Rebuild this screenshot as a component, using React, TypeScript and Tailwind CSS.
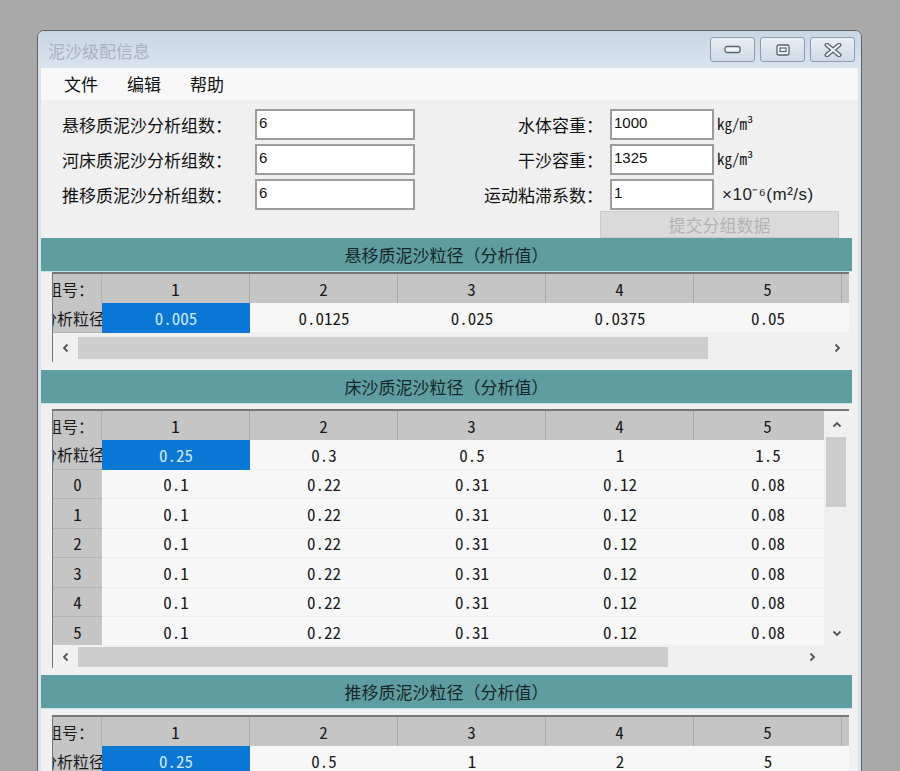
import React from 'react';

type Row = { head: string; cells: string[]; h: string; text?: boolean };

const cols = ['1', '2', '3', '4', '5', '6'];

function Chevron({ dir }: { dir: 'left' | 'right' | 'up' | 'down' }) {
  const d = {
    left: 'M6.5 1.5L3 5l3.5 3.5',
    right: 'M3.5 1.5L7 5 3.5 8.5',
    up: 'M1.5 6.5L5 3l3.5 3.5',
    down: 'M1.5 3.5L5 7l3.5-3.5',
  }[dir];
  return (
    <svg width="10" height="10" viewBox="0 0 10 10">
      <path d={d} fill="none" stroke="#555" strokeWidth="1.8" />
    </svg>
  );
}

function WinButton({ kind }: { kind: 'min' | 'max' | 'close' }) {
  return (
    <div className="flex h-[25px] w-[45px] items-center justify-center rounded-[3px] border border-[#8e9dac] bg-linear-to-b from-[#e8eef4] to-[#cfdae5]">
      {kind === 'min' && (
        <svg width="17" height="9" viewBox="0 0 17 9">
          <rect x="1" y="1.5" width="15" height="6" rx="2" fill="#f3f6f9" stroke="#56636f" strokeWidth="1.3" />
        </svg>
      )}
      {kind === 'max' && (
        <svg width="14" height="12" viewBox="0 0 14 12">
          <rect x="1" y="1" width="12" height="10" rx="1.5" fill="#f3f6f9" stroke="#56636f" strokeWidth="1.3" />
          <rect x="4" y="4" width="6" height="3.5" fill="none" stroke="#56636f" strokeWidth="1.2" />
        </svg>
      )}
      {kind === 'close' && (
        <svg width="20" height="14" viewBox="0 0 20 14">
          <path d="M4 2l12 10M16 2L4 12" stroke="#56636f" strokeWidth="4.8" strokeLinecap="round" />
          <path d="M4 2l12 10M16 2L4 12" stroke="#f3f6f9" strokeWidth="2.2" strokeLinecap="round" />
        </svg>
      )}
    </div>
  );
}

function Field({ value, w }: { value: string; w: string }) {
  return (
    <div className={`${w} h-[31px] border-2 border-[#9c9c9c] bg-white pl-[2px] pt-[3px] font-['Liberation_Sans',sans-serif] text-[15px] leading-[18px] text-[#111]`}>
      {value}
    </div>
  );
}

function SectionBar({ title }: { title: string }) {
  return (
    <div className="flex h-[34px] w-[811px] items-center justify-center border-b border-[#c3e6e8] bg-[#5f9ea0] text-[17px] text-[#17262b]">
      {title}
    </div>
  );
}

const mono = "font-['Noto_Sans_Mono_CJK_SC','Liberation_Mono',monospace] text-[17px]";

function Grid({
  rows,
  bodyH,
  vScroll,
  hScroll,
}: {
  rows: Row[];
  bodyH: string;
  vScroll?: boolean;
  hScroll?: 'tall' | 'short';
}) {
  return (
    <div className="ml-[11px] w-[797px] border-t-2 border-l border-[#767676] bg-[#f1f1f1]">
      <div className="flex">
        <div className={`${vScroll ? 'w-[771px]' : 'w-[796px]'} overflow-hidden`}>
          <div className="flex h-[29px] w-max bg-[#c5c5c5]">
            <div className="flex w-[49px] shrink-0 items-center overflow-hidden border-r border-[#b2b2b2] text-[16px]">
              <span className="ml-[-23px] whitespace-nowrap">分组号：</span>
            </div>
            {cols.map((c) => (
              <div
                key={c}
                className={`flex w-[148px] shrink-0 items-center justify-center border-r border-[#a8a8a8] ${mono}`}
              >
                {c}
              </div>
            ))}
          </div>
          <div className={`${bodyH} overflow-hidden`}>
            {rows.map((r, i) => (
              <div key={i} className={`flex w-max ${r.h}`}>
                <div
                  className={`flex w-[49px] shrink-0 items-center overflow-hidden border-b border-[#b3b3b3] bg-[#c5c5c5] ${
                    r.text ? 'text-[16px]' : `justify-center ${mono}`
                  }`}
                >
                  {r.text ? <span className="ml-[-12px] whitespace-nowrap">{r.head}</span> : r.head}
                </div>
                {r.cells.map((v, j) => (
                  <div
                    key={j}
                    className={`flex w-[148px] shrink-0 items-center justify-center ${mono} ${
                      i === 0 && j === 0
                        ? 'bg-[#0a77d5] text-[#d4eaff]'
                        : 'border-b border-[#efefef] bg-[#f7f7f7] text-[#1a1a1a]'
                    }`}
                  >
                    {v}
                  </div>
                ))}
              </div>
            ))}
          </div>
        </div>
        {vScroll && (
          <div className="flex w-[25px] flex-col bg-[#f0f0f0]">
            <div className="flex h-[26px] items-center justify-center pt-[2px]">
              <Chevron dir="up" />
            </div>
            <div className="ml-[2px] h-[70px] w-[20px] bg-[#cdcdcd]" />
            <div className="flex-1" />
            <div className="flex h-[24px] items-center justify-center">
              <Chevron dir="down" />
            </div>
          </div>
        )}
      </div>
      {hScroll === 'tall' && (
        <div className="flex h-[29px] items-center bg-[#f0f0f0]">
          <div className="flex w-[25px] justify-center">
            <Chevron dir="left" />
          </div>
          <div className="h-[22px] w-[630px] bg-[#cdcdcd]" />
          <div className="flex-1" />
          <div className="flex w-[24px] justify-center">
            <Chevron dir="right" />
          </div>
        </div>
      )}
      {hScroll === 'short' && (
        <div className="flex h-[23px] items-center bg-[#f0f0f0]">
          <div className="flex w-[25px] justify-center">
            <Chevron dir="left" />
          </div>
          <div className="h-[20px] w-[590px] bg-[#cdcdcd]" />
          <div className="flex-1" />
          <div className="flex w-[24px] justify-center">
            <Chevron dir="right" />
          </div>
          <div className="w-[25px]" />
        </div>
      )}
    </div>
  );
}

const leftFields = [
  { label: '悬移质泥沙分析组数：', value: '6' },
  { label: '河床质泥沙分析组数：', value: '6' },
  { label: '推移质泥沙分析组数：', value: '6' },
];

const rightFields = [
  { label: '水体容重：', value: '1000', unit: 'kg/m³', isMono: true },
  { label: '干沙容重：', value: '1325', unit: 'kg/m³', isMono: true },
  { label: '运动粘滞系数：', value: '1', unit: '×10⁻⁶(m²/s)', isMono: false },
];

const bedRow = ['0.1', '0.22', '0.31', '0.12', '0.08', '0.05'];

export default function App() {
  const grid1: Row[] = [
    { head: '分析粒径', text: true, h: 'h-[30px]', cells: ['0.005', '0.0125', '0.025', '0.0375', '0.05', '0.075'] },
  ];
  const grid2: Row[] = [
    { head: '分析粒径', text: true, h: 'h-[29.5px]', cells: ['0.25', '0.3', '0.5', '1', '1.5', '2'] },
    ...['0', '1', '2', '3', '4', '5'].map((n) => ({ head: n, h: 'h-[29.5px]', cells: bedRow })),
  ];
  const grid3: Row[] = [
    { head: '分析粒径', text: true, h: 'h-[30px]', cells: ['0.25', '0.5', '1', '2', '5', '10'] },
  ];

  return (
    <div className="h-[771px] w-[900px] overflow-hidden bg-[#a9a9a9] pl-[37px] pt-[30px] font-['Noto_Sans_CJK_SC',sans-serif] text-[#1a1a1a]">
      <div className="w-[825px] rounded-t-[7px] border border-[#5f6368] bg-[#d9e3ec]">
        {/* title bar */}
        <div className="flex h-[37px] items-start justify-between rounded-t-[6px] bg-linear-to-b from-[#c8d6e3] to-[#d9e4ed]">
          <div className="ml-[10px] mt-[7px] text-[17px] text-[#aab3bc]">泥沙级配信息</div>
          <div className="mr-[6px] mt-[6px] flex gap-[5px]">
            <WinButton kind="min" />
            <WinButton kind="max" />
            <WinButton kind="close" />
          </div>
        </div>

        <div className="mx-[3px] h-[720px] bg-[#f0f0f0]">
          {/* menu */}
          <div className="flex h-[32px] items-center gap-[29px] bg-[#f8f8f8] pl-[23px] text-[17px] text-[#111]">
            <span>文件</span>
            <span>编辑</span>
            <span>帮助</span>
          </div>

          {/* form */}
          <div className="flex pt-[9px]">
            <div className="ml-[21px] flex flex-col gap-[4px]">
              {leftFields.map((f) => (
                <div key={f.label} className="flex h-[31px] items-center">
                  <div className="w-[193px] text-[17px] text-[#111]">{f.label}</div>
                  <Field value={f.value} w="w-[160px]" />
                </div>
              ))}
            </div>
            <div className="flex flex-col gap-[4px]">
              {rightFields.map((f) => (
                <div key={f.label} className="flex h-[31px] items-center">
                  <div className="w-[188px] text-right text-[17px] text-[#111]">{f.label}</div>
                  <div className="ml-[7px]">
                    <Field value={f.value} w="w-[104px]" />
                  </div>
                  <div
                    className={
                      f.isMono
                        ? "ml-[3px] font-['Noto_Sans_Mono_CJK_SC','Liberation_Mono',monospace] text-[15px] text-[#111]"
                        : "ml-[8px] font-['Liberation_Sans',sans-serif] text-[17px] tracking-[0.5px] text-[#222]"
                    }
                  >
                    {f.unit}
                  </div>
                </div>
              ))}
            </div>
          </div>
          <div className="mt-[1px] flex justify-end pr-[19px]">
            <div className="flex h-[27px] w-[239px] items-center justify-center border border-[#cacaca] bg-[#dadada] text-[17px] text-[#b4b4b4]">
              提交分组数据
            </div>
          </div>

          <SectionBar title="悬移质泥沙粒径（分析值）" />
          <Grid rows={grid1} bodyH="h-[30px]" hScroll="tall" />

          <div className="mt-[8px]">
            <SectionBar title="床沙质泥沙粒径（分析值）" />
          </div>
          <div className="mt-[5px]">
            <Grid rows={grid2} bodyH="h-[205px]" vScroll hScroll="short" />
          </div>

          <div className="mt-[7px]">
            <SectionBar title="推移质泥沙粒径（分析值）" />
          </div>
          <div className="mt-[6px]">
            <Grid rows={grid3} bodyH="h-[60px]" />
          </div>
        </div>
      </div>
    </div>
  );
}
